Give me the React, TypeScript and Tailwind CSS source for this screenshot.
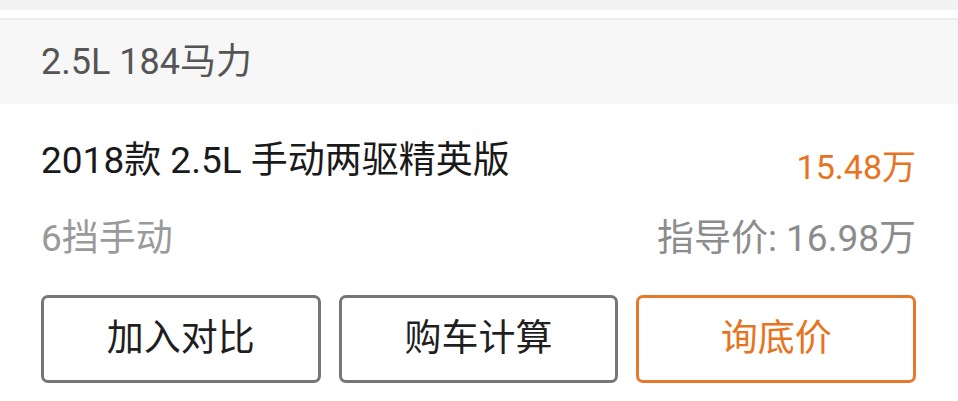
export default function App() {
  const font = { fontFamily: '"Roboto", "Noto Sans CJK SC", sans-serif' };
  return (
    <div className="w-[958px] h-[401px] overflow-hidden bg-white" style={font}>
      <div className="h-[10px] bg-[#f2f2f2]" />
      <div className="h-[8px] bg-white" />
      <div className="h-[86px] border-t-2 border-[#ececec] bg-[#f7f7f7] flex items-center px-[41px]">
        <span className="text-[36px] text-[#555555] leading-none">2.5L 184马力</span>
      </div>

      <div className="px-[41px] pr-[42px]">
        <div className="mt-[28px] h-[56px] flex items-center justify-between">
          <span className="text-[37px] text-[#1a1a1a] leading-none">2018款 2.5L 手动两驱精英版</span>
          <span className="text-[34px] text-[#e8731e] leading-none mt-[14px]">15.48万</span>
        </div>
        <div className="mt-[28px] h-[44px] flex items-center justify-between">
          <span className="text-[37px] text-[#9a9a9a] leading-none">6挡手动</span>
          <span className="text-[37px] text-[#8c8c8c] leading-none">指导价: 16.98万</span>
        </div>

        <div className="mt-[35px] grid grid-cols-3 gap-[18px]">
          <button className="h-[88px] rounded-[7px] border-[3px] border-[#767676] bg-white text-[37px] text-[#1f1f1f]">
            加入对比
          </button>
          <button className="h-[88px] rounded-[7px] border-[3px] border-[#767676] bg-white text-[37px] text-[#1f1f1f]">
            购车计算
          </button>
          <button className="h-[88px] rounded-[7px] border-[3px] border-[#e8782a] bg-white text-[37px] text-[#e8731e]">
            询底价
          </button>
        </div>
      </div>
    </div>
  );
}
